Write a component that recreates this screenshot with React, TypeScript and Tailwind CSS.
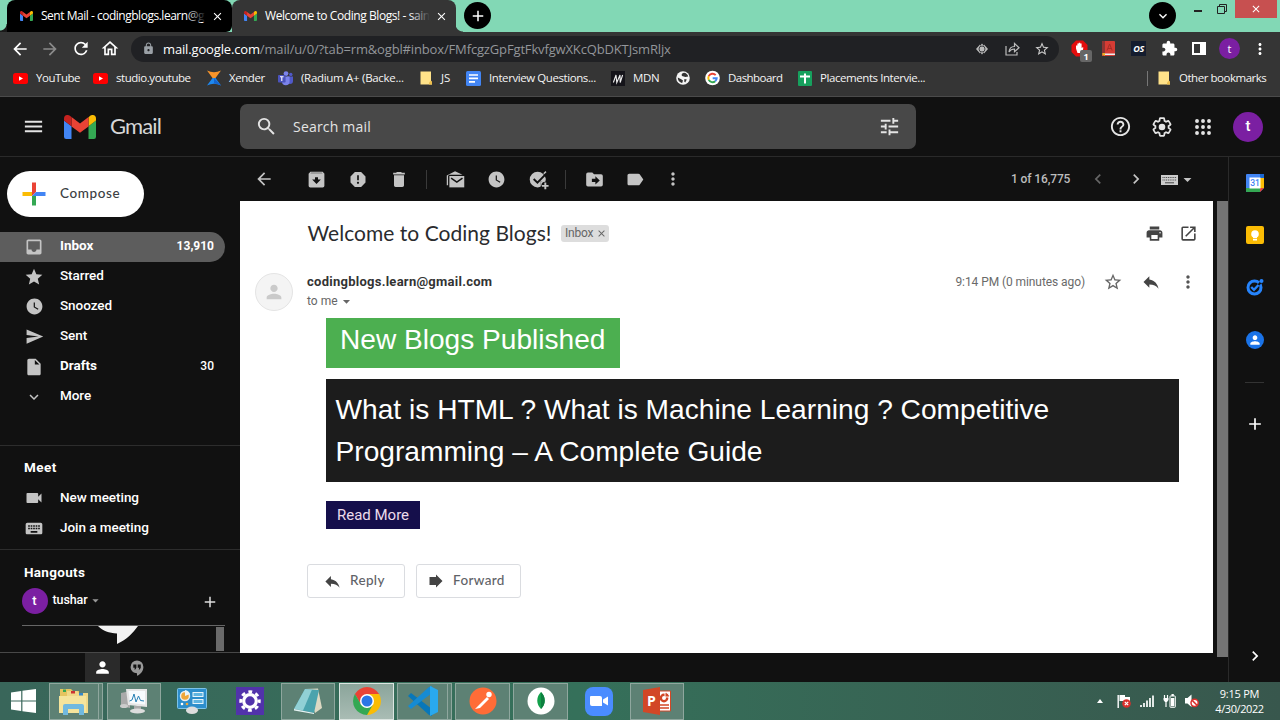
import React from "react";
import {
  MdAdd, MdArrowBack, MdArrowDropDown, MdArrowForward, MdChevronLeft, MdChevronRight, MdClose,
  MdDelete, MdExpandMore, MdExtension, MdHelpOutline, MdInsertDriveFile, MdKeyboard, MdLabel, MdLock,
  MdMenu, MdMoreVert, MdOpenInNew, MdOutlineHome, MdPerson, MdPrint, MdRefresh, MdReply,
  MdReport, MdSearch, MdSend, MdStar, MdStarBorder, MdTune, MdVideocam, MdWatchLater,
} from "react-icons/md";

type Kids = { className?: string; children?: React.ReactNode };

const Cell = ({ className = "", children }: Kids) => (
  <div className={"flex h-[20px] w-[20px] shrink-0 items-center justify-center " + className}>{children}</div>
);

const Label = ({ className = "", children }: Kids) => (
  <span className={"shrink-0 whitespace-nowrap leading-none " + className}>{children}</span>
);

const GmailLogo = ({ className = "" }: { className?: string }) => (
  <svg viewBox="0 0 32 24" className={"shrink-0 " + className}>
    <path d="M2.2 24H7.5V11.2L0 5.6V21.8A2.2 2.2 0 0 0 2.2 24Z" fill="#4285f4" />
    <path d="M24.5 24H29.8A2.2 2.2 0 0 0 32 21.8V5.6L24.5 11.2Z" fill="#34a853" />
    <path d="M24.5 2.2V11.2L32 5.6V3.3C32 .6 28.8-1 26.5.6Z" fill="#fbbc04" />
    <path d="M7.5 11.4V2L16 8.4L24.5 2V11.4L16 17.8Z" fill="#ea4335" />
    <path d="M0 3.3V5.6L7.5 11.2V2L5.5.6C3.2-1 0 .6 0 3.3Z" fill="#c5221f" />
  </svg>
);

const Tab = ({ active, title }: { active?: boolean; title: string }) => (
  <div
    className={
      "relative flex h-[32px] shrink-0 items-center rounded-t-[8px] " +
      (active ? "w-[224px] bg-[#353535] pl-[12px]" : "w-[225px] rounded-br-[6px] bg-black pl-[13px]")
    }
  >
    <GmailLogo className="h-[10px] w-[13px]" />
    <div className="relative ml-[8px] w-[165px]">
      <Label className={"block text-[12px] leading-[18px] text-white " + (active ? "tracking-[-0.42px]" : "tracking-[-0.48px]")}>{title}</Label>
      <div className={"absolute inset-y-0 right-0 w-[20px] bg-linear-to-r from-transparent " + (active ? "to-[#353535]" : "to-black")} />
    </div>
    <MdClose className="ml-[5px] shrink-0 text-[13px] text-white" />
  </div>
);

const YoutubeIcon = () => (
  <svg viewBox="0 0 15 11" className="h-[11px] w-[15px]">
    <rect width="15" height="11" rx="2.5" fill="#f00" />
    <path d="M6 3.2L10 5.5L6 7.8Z" fill="#fff" />
  </svg>
);
const XenderIcon = () => (
  <svg viewBox="0 0 14 16" className="h-[16px] w-[14px]">
    <path d="M0 .5Q7 4 14 .5L8.5 8H5.5Z" fill="#f7942a" />
    <path d="M5.5 8H8.5L14 15.5Q7 12 0 15.5Z" fill="#1e88f0" />
    <path d="M7 8L14 15.5Q10 13.5 7 13.5Z" fill="#1565d0" />
  </svg>
);
const TeamsIcon = () => (
  <svg viewBox="0 0 15 15" className="h-[15px] w-[15px]">
    <circle cx="8" cy="2.6" r="2.4" fill="#7b83eb" />
    <circle cx="12.8" cy="3.4" r="1.7" fill="#5059c9" />
    <path d="M9 5.5H15V10A3 3 0 0 1 9 10Z" fill="#5059c9" />
    <path d="M4 5.5H11.6V10.5A3.8 3.8 0 0 1 4 10.5Z" fill="#7b83eb" />
    <rect y="4" width="7.6" height="7.6" rx=".8" fill="#4b53bc" />
    <path d="M2 5.8H5.6M3.8 5.8V10" stroke="#fff" strokeWidth="1.1" />
  </svg>
);
const FolderIcon = () => (
  <svg viewBox="0 0 12 14" className="h-[14px] w-[12px]">
    <path d="M.5.5H11V10L12 11V13.5H.5Z" fill="#ffe289" />
    <path d="M9 13.5V11.5L11 9.5L12 11V13.5Z" fill="#eebf4d" />
  </svg>
);
const DocsIcon = () => (
  <svg viewBox="0 0 15 15" className="h-[15px] w-[15px]">
    <rect width="15" height="15" rx="1.5" fill="#4285f4" />
    <path d="M3 4H12M3 7.4H12M3 10.8H9" stroke="#fff" strokeWidth="1.7" />
  </svg>
);
const MdnIcon = () => (
  <svg viewBox="0 0 14 15" className="h-[15px] w-[14px]">
    <rect width="14" height="15" fill="#15141a" />
    <path d="M2.4 11.5L5 4L5.8 11.5L9 4L9.2 11.5L11.6 4" stroke="#eee" strokeWidth="1.1" fill="none" />
  </svg>
);
const GlobeIcon = () => (
  <svg viewBox="0 0 14 14" className="h-[14px] w-[14px]">
    <circle cx="7" cy="7" r="6.8" fill="#f4f4f4" />
    <path d="M8 1.8C5.8 2 5.2 3.6 6 5L9.4 6L12.2 5.6C11.8 3.4 10 2 8 1.8ZM1.8 6.6L5.2 8.2L7 9.4L6.2 12C3.6 11.8 1.8 9.4 1.8 6.6ZM8.4 8L10.8 8.4L9.2 11.4L8.2 10.4Z" fill="#333" />
  </svg>
);
const GoogleIcon = () => (
  <svg viewBox="0 0 16 16" className="h-[16px] w-[16px]">
    <circle cx="8" cy="8" r="7.8" fill="#fff" />
    <g fill="none" strokeWidth="2.1">
      <path d="M11.4 4.9A4.5 4.5 0 0 0 4 6" stroke="#ea4335" />
      <path d="M4 6A4.5 4.5 0 0 0 4 10" stroke="#fbbc05" />
      <path d="M4 10A4.5 4.5 0 0 0 10.9 11.4" stroke="#34a853" />
      <path d="M10.9 11.4A4.3 4.3 0 0 0 12.5 8.3H8.2" stroke="#4285f4" />
    </g>
  </svg>
);
const SheetsIcon = () => (
  <svg viewBox="0 0 14 15" className="h-[15px] w-[14px]">
    <rect width="14" height="15" rx="1" fill="#16a05d" />
    <path d="M2 5.6H12M7 2.5V12.5" stroke="#fff" strokeWidth="2" />
  </svg>
);

const Bookmark = ({ icon, className, text, textClass }: { icon: React.ReactNode; className: string; text?: string; textClass?: string }) => (
  <div className={"flex shrink-0 items-center " + className}>
    <div className="flex w-[15px] shrink-0 justify-center">{icon}</div>
    {text && <Label className={"ml-[8px] text-[11.5px] text-[#f4f4f4] " + textClass}>{text}</Label>}
  </div>
);

function Browser() {
  return (
    <div className="flex shrink-0 flex-col font-['Open_Sans',sans-serif]">
      <div className="flex h-[32px] bg-[#82d8b5]">
        <div className="mt-[24px] h-[8px] w-[7px] shrink-0 bg-[radial-gradient(circle_at_0_0,transparent_6px,#1a1a1a_7px)]" />
        <Tab title="Sent Mail - codingblogs.learn@g" />
        <Tab active title="Welcome to Coding Blogs! - sain" />
        <div className="mt-[24px] h-[8px] w-[7px] shrink-0 bg-[radial-gradient(circle_at_100%_0,transparent_7px,#353535_8px)]" />
        <div className="ml-[1px] mt-[2px] flex h-[27px] w-[27px] items-center justify-center rounded-full bg-black">
          <MdAdd className="text-[18px] text-white" />
        </div>
        <div className="ml-auto mt-[2px] flex h-[27px] w-[27px] items-center justify-center rounded-full bg-black">
          <MdExpandMore className="text-[16px] text-white" />
        </div>
        <div className="ml-[18px] mt-[10px] h-[2px] w-[8px] bg-[#222]" />
        <svg viewBox="0 0 10 10" className="ml-[15px] mt-[4px] h-[10px] w-[10px]" fill="none" stroke="#222">
          <path d="M2.5 2V.5H9.5V7.5H8" />
          <path d="M.5 2.5H7.5V9.5H.5Z" />
        </svg>
        <div className="ml-[8px] mr-[3px] flex h-[18px] w-[42px] items-center justify-center bg-[#c75050]">
          <MdClose className="text-[12px] text-white" />
        </div>
      </div>

      <div className="flex h-[33px] items-center bg-[#353535] pl-[10px] text-white">
        <Cell><MdArrowBack className="text-[20px]" /></Cell>
        <Cell className="ml-[10px] text-[#8b8b8b]"><MdArrowForward className="text-[20px]" /></Cell>
        <Cell className="ml-[11px]"><MdRefresh className="text-[21px]" /></Cell>
        <Cell className="ml-[9px]"><MdOutlineHome className="text-[21px]" /></Cell>
        <div className="ml-[11px] flex h-[26px] w-[928px] items-center rounded-full bg-[#202124] pl-[11px]">
          <MdLock className="w-[13px] text-[13px] text-[#9aa0a6]" />
          <Label className="ml-[8px] pt-px text-[13px] tracking-[-0.15px] text-[#93969a]"><span className="text-white">mail.google.com</span>/mail/u/0/?tab=rm&amp;ogbl#inbox/FMfcgzGpFgtFkvfgwXKcQbDKTJsmRljx</Label>
          <svg viewBox="0 0 12 12" className="ml-auto h-[12px] w-[12px]">
            <path d="M0 6L4 1.5V10.5ZM12 6L8 1.5V10.5Z" fill="#bbb" />
            <path d="M6 .5L10.5 6L6 11.5L1.5 6Z" fill="#bbb" />
            <circle cx="6" cy="6" r="3" fill="#bbb" stroke="#202124" strokeWidth=".8" />
          </svg>
          <svg viewBox="0 0 15 14" className="ml-[17px] h-[14px] w-[15px]" fill="none" stroke="#bbb" strokeWidth="1.2">
            <path d="M1 4V13H12V10" />
            <path d="M4 10C4.3 6.5 6.4 4.6 9.5 4.5V1.5L14 5.7L9.5 9.7V7C7 7 5.2 8 4 10Z" />
          </svg>
          <MdStarBorder className="ml-[14px] mr-[9px] text-[16px] text-[#ccc]" />
        </div>
        <div className="relative ml-[12px] h-[17px] w-[17px]">
          <svg viewBox="0 0 17 17" className="h-[17px] w-[17px]">
            <path d="M5 .5H12L16.5 5V12L12 16.5H5L.5 12V5Z" fill="#e40d0d" />
            <path d="M5 8.5V5.5H6.4V3.5H7.8V2.8H9.2V3.5H10.6V8L12.2 7V9L10.5 13H6.5Z" fill="#fff" />
          </svg>
          <div className="absolute left-[9px] top-[10px] flex h-[12px] w-[12px] items-center justify-center rounded-[2px] bg-[#666] text-[9px] font-bold leading-none">1</div>
        </div>
        <svg viewBox="0 0 13 15" className="ml-[14px] h-[15px] w-[13px]">
          <rect width="13" height="15" rx="1" fill="#d63c34" />
          <path d="M0 0H3V12H0Z" fill="#8d3533" />
          <path d="M1 12.5H13V14H1Z" fill="#eee" />
          <path d="M5 9.5L7.6 3L10.2 9.5M6 7.5H9.2" stroke="#a82c26" fill="none" />
          <path d="M.5 12H3V15L1.7 14L.5 15Z" fill="#e8b422" />
        </svg>
        <div className="ml-[16px] flex h-[15px] w-[15px] items-center justify-center bg-[#141c2e] text-[9px] font-bold italic leading-none tracking-[-0.5px]">OS</div>
        <MdExtension className="ml-[15px] text-[17px]" />
        <div className="ml-[14px] flex h-[13px] w-[14px] justify-end border-2 border-white"><div className="w-[4px] bg-white" /></div>
        <div className="ml-[13px] flex h-[21px] w-[21px] items-center justify-center rounded-full bg-[#7b1fa2] text-[11px] leading-none">t</div>
        <MdMoreVert className="ml-[11px] text-[18px]" />
      </div>

      <div className="flex h-[32px] items-center border-b border-[#4b4b4b] bg-[#353535] pb-[5px] pl-[13px]">
        <Bookmark className="w-[80px]" icon={<YoutubeIcon />} text="YouTube" textClass="tracking-[-0.45px]" />
        <Bookmark className="w-[113px]" icon={<YoutubeIcon />} text="studio.youtube" textClass="tracking-[-0.45px]" />
        <Bookmark className="w-[72px]" icon={<XenderIcon />} text="Xender" textClass="tracking-[-0.45px]" />
        <Bookmark className="w-[140px]" icon={<TeamsIcon />} text="(Radium A+ (Backe..." textClass="tracking-[-0.3px]" />
        <Bookmark className="w-[48px]" icon={<FolderIcon />} text="JS" />
        <Bookmark className="w-[144px]" icon={<DocsIcon />} text="Interview Questions..." textClass="tracking-[-0.42px]" />
        <Bookmark className="w-[65px]" icon={<MdnIcon />} text="MDN" textClass="tracking-[-0.3px]" />
        <Bookmark className="w-[30px]" icon={<GlobeIcon />} />
        <Bookmark className="w-[92px]" icon={<GoogleIcon />} text="Dashboard" textClass="tracking-[-0.55px]" />
        <Bookmark className="w-[140px]" icon={<SheetsIcon />} text="Placements Intervie..." textClass="tracking-[-0.43px]" />
        <div className="ml-auto h-[15px] w-px bg-[#777]" />
        <Bookmark className="ml-[8px] w-[124px]" icon={<FolderIcon />} text="Other bookmarks" textClass="tracking-[-0.47px]" />
      </div>
    </div>
  );
}

function Header() {
  return (
    <div className="flex h-[60px] shrink-0 items-center border-b border-[#2a2a2a] bg-[#111] text-[#e4e4e4]">
      <MdMenu className="ml-[22px] w-[23px] text-[23px]" />
      <GmailLogo className="ml-[19px] h-[24px] w-[32px]" />
      <Label className="ml-[14px] w-[130px] pb-[2px] font-['Lato',sans-serif] text-[22px] tracking-[-0.85px] text-[#d6d6d6]">Gmail</Label>
      <div className="flex h-[45px] w-[676px] shrink-0 items-center rounded-[7px] bg-[#484848] pl-[15px] pr-[15px] font-['Open_Sans',sans-serif]">
        <MdSearch className="text-[23px]" />
        <Label className="ml-[15px] text-[14px] font-medium tracking-[0.2px]">Search mail</Label>
        <MdTune className="ml-auto text-[23px]" />
      </div>
      <MdHelpOutline className="ml-[193px] w-[23px] text-[23px]" />
      <svg viewBox="0 0 24 24" className="ml-[18.5px] h-[22px] w-[22px] shrink-0">
        <path
          d="M19.14,12.94c0.04-0.3,0.06-0.61,0.06-0.94c0-0.32-0.02-0.64-0.07-0.94l2.03-1.58c0.18-0.14,0.23-0.41,0.12-0.61l-1.92-3.32c-0.12-0.22-0.37-0.29-0.59-0.22l-2.39,0.96c-0.5-0.38-1.03-0.7-1.62-0.94L14.4,2.81c-0.04-0.24-0.24-0.41-0.48-0.41h-3.84c-0.24,0-0.43,0.17-0.47,0.41L9.25,5.35C8.66,5.59,8.12,5.92,7.63,6.29L5.24,5.33c-0.22-0.08-0.47,0-0.59,0.22L2.74,8.87C2.62,9.08,2.66,9.34,2.86,9.48l2.03,1.58C4.84,11.36,4.8,11.69,4.8,12s0.02,0.64,0.07,0.94l-2.03,1.58c-0.18,0.14-0.23,0.41-0.12,0.61l1.92,3.32c0.12,0.22,0.37,0.29,0.59,0.22l2.39-0.96c0.5,0.38,1.03,0.7,1.62,0.94l0.36,2.54c0.05,0.24,0.24,0.41,0.48,0.41h3.84c0.24,0,0.44-0.17,0.47-0.41l0.36-2.54c0.59-0.24,1.13-0.56,1.62-0.94l2.39,0.96c0.22,0.08,0.47,0,0.59-0.22l1.92-3.32c0.12-0.22,0.07-0.47-0.12-0.61L19.14,12.94z"
          fill="none" stroke="currentColor" strokeWidth="1.9"
        />
        <circle cx="12" cy="12" r="3.6" fill="currentColor" />
      </svg>
      <svg viewBox="0 0 16 16" className="ml-[22.5px] h-[16px] w-[16px] shrink-0" fill="currentColor">
        {[2, 8, 14].map((y) => [2, 8, 14].map((x) => <circle key={x + "-" + y} cx={x} cy={y} r="1.95" />))}
      </svg>
      <div className="ml-[22px] flex h-[30px] w-[30px] shrink-0 items-center justify-center rounded-full bg-[#7b1fa2] font-['Roboto',sans-serif] text-[15px] font-medium text-white">t</div>
    </div>
  );
}

const InboxGlyph = () => (
  <svg viewBox="0 0 24 24" className="h-[20px] w-[20px]" fill="currentColor">
    <path d="M19 3H5c-1.1 0-2 .9-2 2v14c0 1.1.9 2 2 2h14c1.1 0 2-.9 2-2V5c0-1.1-.9-2-2-2zm0 12h-4c0 1.66-1.35 3-3 3s-3-1.34-3-3H5V5h14v10z" />
  </svg>
);

const NavRow = ({ icon, text, count, active, bold }: { icon: React.ReactNode; text: string; count?: string; active?: boolean; bold?: boolean }) => (
  <div className={"flex h-[30px] w-[225px] shrink-0 items-center rounded-r-full pl-[24px] pr-[11px] text-white " + (active ? "bg-[#5d5d5d]" : "")}>
    <Cell className="text-[20px] text-[#c4c4c4]">{icon}</Cell>
    <Label className={"ml-[16px] pb-[1px] text-[13.5px] " + (bold ? "font-bold tracking-[0px]" : "font-medium tracking-[-0.05px]")}>{text}</Label>
    {count && <Label className={"ml-auto pb-[1px] text-[12px] " + (active ? "font-bold" : "font-medium")}>{count}</Label>}
  </div>
);

function Sidebar() {
  return (
    <div className="flex w-[240px] shrink-0 flex-col font-['Roboto',sans-serif]">
      <div className="ml-[7px] mt-[14px] flex h-[46px] w-[137px] shrink-0 items-center rounded-full bg-white pl-[15px]">
        <svg viewBox="0 0 24 24" className="h-[24px] w-[24px]">
          <path d="M10 0.5H14V10L10 14Z" fill="#ea4335" />
          <path d="M0.5 10H10V14H0.5Z" fill="#fbbc04" />
          <path d="M14 10H23.5V14H12L10 14Z" fill="#4285f4" />
          <path d="M10 14H14V23.5H10Z" fill="#34a853" />
        </svg>
        <Label className="ml-[14px] font-['Lato',sans-serif] text-[13.5px] font-medium tracking-[0.6px] text-[#3c4043]">Compose</Label>
      </div>
      <div className="mt-[14.5px] flex flex-col">
        <NavRow active bold icon={<InboxGlyph />} text="Inbox" count="13,910" />
        <NavRow icon={<MdStar />} text="Starred" />
        <NavRow icon={<MdWatchLater className="text-[19px]" />} text="Snoozed" />
        <NavRow icon={<MdSend className="text-[19px]" />} text="Sent" />
        <NavRow bold icon={<MdInsertDriveFile />} text="Drafts" count="30" />
        <NavRow icon={<MdExpandMore className="text-[18px]" />} text="More" />
      </div>
      <div className="mt-[33.5px] flex h-[104px] shrink-0 flex-col border-t border-[#2d2d2d]">
        <Label className="ml-[24px] mt-[15px] h-[22px] text-[13.5px] font-bold tracking-[0.45px] text-white">Meet</Label>
        <NavRow icon={<MdVideocam />} text="New meeting" />
        <NavRow icon={<MdKeyboard className="text-[21px]" />} text="Join a meeting" />
      </div>
      <div className="flex h-[103px] shrink-0 flex-col border-t border-[#2d2d2d]">
        <Label className="ml-[24px] mt-[16px] text-[13.5px] font-bold tracking-[0.3px] text-white">Hangouts</Label>
        <div className="mt-[7.5px] flex h-[27px] items-center pl-[21.5px]">
          <div className="flex h-[26px] w-[26px] items-center justify-center rounded-full bg-[#7b1fa2] text-[13px] font-medium text-white">t</div>
          <Label className="ml-[5px] text-[12.5px] font-medium tracking-[-0.1px] text-white">tushar</Label>
          <MdArrowDropDown className="text-[15px] text-[#999]" />
          <MdAdd className="ml-auto mr-[21px] mt-[3px] text-[18px] text-[#ddd]" />
        </div>
        <div className="ml-[22px] mt-[11px] flex h-[26px] w-[203px] border-t border-[#666]">
          <svg viewBox="0 0 40 18" className="ml-[76px] h-[18px] w-[40px]"><path d="M0 0H40C35 7 28 14 19 18V7.5C11 7 5 5 0 0Z" fill="#f2f2f2" /></svg>
          <div className="ml-auto mr-[1px] mt-[1px] h-[24px] w-[8px] bg-[#6a6a6a]" />
        </div>
      </div>
      <div className="flex h-[30px] shrink-0 border-t border-[#484848] pl-[85px]">
        <div className="flex w-[35px] items-center justify-center bg-[#2a2a2a]"><MdPerson className="text-[19px] text-white" /></div>
        <svg viewBox="0 0 14 16" className="ml-[10px] mt-[7px] h-[16px] w-[14px]">
          <path d="M7 .5A6.4 6.4 0 0 0 .6 6.9C.6 10.4 3.4 13 7 13.2V15.8C11 14 13.4 10.5 13.4 6.9A6.4 6.4 0 0 0 7 .5Z" fill="#999" />
          <path d="M3.3 4.5H6.4V7.8L5.3 9.6H4.3L4.9 7.8H3.3ZM7.7 4.5H10.8V7.8L9.7 9.6H8.7L9.3 7.8H7.7Z" fill="#111" />
        </svg>
      </div>
    </div>
  );
}

const ToolSep = ({ className = "" }: { className?: string }) => <div className={"h-[19px] w-px shrink-0 bg-[#3a3a3a] " + className} />;

const glyph = "h-[21px] w-[21px] shrink-0";

function MailToolbar() {
  return (
    <div className="flex h-[44px] shrink-0 items-center pl-[14px] text-[20px] text-[#c4c4c4]">
      <Cell><MdArrowBack /></Cell>
      <Cell className="ml-[32.5px]">
        <svg viewBox="0 0 24 24" className={glyph} fill="currentColor">
          <path d="M5 3H19L21 5.5V19A2 2 0 0 1 19 21H5A2 2 0 0 1 3 19V5.5Z" />
          <path d="M5 5.2L6 4H18L19 5.2Z" fill="#777" />
          <path d="M12 17L7 12H10.3V9.5H13.7V12H17Z" fill="#111" />
        </svg>
      </Cell>
      <Cell className="ml-[21.5px]"><MdReport className="text-[21px]" /></Cell>
      <Cell className="ml-[21px]"><MdDelete className="text-[21px]" /></Cell>
      <ToolSep className="ml-[17px]" />
      <Cell className="ml-[18px]">
        <svg viewBox="0 0 24 24" className={glyph} fill="currentColor">
          <path d="M3 18.5H2V7.5L11.5 2.5L20 6.5H4.5L3.5 8V18.5Z" />
          <path d="M5 8H22V21H5Z" />
          <path d="M7 10.5L13.5 15L20 10.5" stroke="#111" strokeWidth="1.8" fill="none" />
        </svg>
      </Cell>
      <Cell className="ml-[21.5px]"><MdWatchLater className="text-[19px]" /></Cell>
      <Cell className="ml-[21.5px]">
        <svg viewBox="0 0 24 24" className={glyph} fill="currentColor">
          <circle cx="11" cy="12" r="9" />
          <path d="M14 14H24V24H14Z" fill="#111" />
          <path d="M18 19A9 9 0 0 0 20 12V10H16V14H14V20Z" />
          <path d="M6.5 11.5L10.8 15.6L22 4.2" stroke="#111" strokeWidth="2.2" fill="none" />
          <path d="M18 5.4L20.5 3" stroke="currentColor" strokeWidth="1.6" />
          <circle cx="19.8" cy="19.3" r="4.6" fill="#111" />
          <path d="M19.8 15.5V23M16 19.3H23.5" stroke="currentColor" strokeWidth="2.2" />
        </svg>
      </Cell>
      <ToolSep className="ml-[17px]" />
      <Cell className="ml-[18px]">
        <svg viewBox="0 0 24 24" className={glyph} fill="currentColor">
          <path d="M4.5 4H9.5L11.5 6H19.5A2 2 0 0 1 21.5 8V18A2 2 0 0 1 19.5 20H4.5A2 2 0 0 1 2.5 18V6A2 2 0 0 1 4.5 4Z" />
          <path d="M9 11.2H13V8.2L18 13L13 17.8V14.8H9Z" fill="#111" />
        </svg>
      </Cell>
      <Cell className="ml-[21px]"><MdLabel className="text-[21px]" /></Cell>
      <Cell className="ml-[17.5px]"><MdMoreVert /></Cell>
      <Label className="ml-[328.5px] w-[76px] font-['Roboto',sans-serif] text-[12px] font-medium tracking-[-0.12px] text-[#bdbdbd]">1 of 16,775</Label>
      <Cell className="ml-[1px] text-[#666]"><MdChevronLeft /></Cell>
      <Cell className="ml-[17.5px]"><MdChevronRight /></Cell>
      <svg viewBox="0 0 17 10" className="ml-[15.5px] mt-[2px] h-[10px] w-[17px]">
        <path d="M0 0H17V10H0Z" fill="#ccc" />
        <path d="M1.5 2.5H15.5M1.5 5H15.5" stroke="#444" strokeDasharray="1 .8" />
        <path d="M4 7.8H13" stroke="#444" />
      </svg>
      <MdArrowDropDown className="text-[19px]" />
    </div>
  );
}

const ReplyButton = ({ className, icon, text }: { className: string; icon: React.ReactNode; text: string }) => (
  <div className={"flex h-[34px] items-center rounded-[3px] border border-[#dadce0] text-[#5f6368] " + className}>
    {icon}
    <Label className="ml-[8px] font-['Lato',sans-serif] text-[13.5px] font-medium tracking-[0.35px]">{text}</Label>
  </div>
);

function Message() {
  return (
    <div className="flex h-[452px] w-[973px] shrink-0 flex-col bg-white font-['Roboto',sans-serif]">
      <div className="mt-[16px] flex h-[32px] items-center pl-[67.5px]">
        <Label className="pb-[2px] font-['Lato',sans-serif] text-[21px] tracking-[0.03px] text-[#2a2b2e]">Welcome to Coding Blogs!</Label>
        <div className="ml-[9.5px] flex h-[17px] w-[48px] items-center rounded-[3px] bg-[#ddd] pl-[4px] text-[#666]">
          <Label className="text-[12px] tracking-[-0.2px]">Inbox</Label>
          <MdClose className="ml-[3px] text-[11px]" />
        </div>
        <MdPrint className="ml-auto text-[19px] text-[#444]" />
        <MdOpenInNew className="ml-[15px] mr-[15px] text-[19px] text-[#444]" />
      </div>
      <div className="mt-[23px] flex h-[42px]">
        <div className="ml-[15px] mt-[1px] flex h-[38px] w-[38px] items-center justify-center rounded-full border border-[#e4e4e4] bg-[#f4f4f4]">
          <MdPerson className="text-[22px] text-[#cacaca]" />
        </div>
        <div className="ml-[14px] mt-[3px] flex flex-col">
          <Label className="text-[13px] font-bold tracking-[0.26px] text-[#333]">codingblogs.learn@gmail.com</Label>
          <div className="mt-[6px] flex h-[14px] items-center text-[#666]">
            <Label className="text-[12px] tracking-[0px]">to me</Label>
            <MdArrowDropDown className="text-[17px]" />
          </div>
        </div>
        <Label className="ml-auto mt-[4px] text-[12px] tracking-[-0.08px] text-[#6a6a6a]">9:14 PM (0 minutes ago)</Label>
        <MdStarBorder className="ml-[18px] text-[20px] text-[#666]" />
        <MdReply className="ml-[18px] text-[20px] text-[#444]" />
        <MdMoreVert className="ml-[17px] mr-[15px] text-[20px] text-[#555]" />
      </div>
      <div className="ml-[86px] mt-[4px] flex flex-col items-start font-['Liberation_Sans',sans-serif]">
        <h1 className="h-[50px] w-[294px] whitespace-nowrap bg-[#4caf50] pl-[14px] text-[28.1px] leading-[44px] text-white">New Blogs Published</h1>
        <p className="mt-[11px] h-[103px] w-[853px] bg-[#1c1c1c] pl-[9.5px] pt-[10px] text-[28.15px] leading-[42.4px] text-white">
          What is HTML ? What is Machine Learning ? Competitive<br />Programming – A Complete Guide
        </p>
        <div className="mt-[19px] flex h-[28px] w-[94px] items-center justify-center bg-[#150f4b] font-['Roboto',sans-serif] text-[15px] text-[#ecdcec]">Read More</div>
      </div>
      <div className="ml-[67px] mt-[35px] flex gap-[11px]">
        <ReplyButton className="w-[98px] pl-[15px]" icon={<MdReply className="text-[19px] text-[#444]" />} text="Reply" />
        <ReplyButton
          className="w-[105px] pl-[12px]"
          icon={<svg viewBox="0 0 14 14" className="mr-[2px] h-[14px] w-[14px]"><path d="M.5 3H7V.5L13.5 7L7 13.5V11H.5Z" fill="#444" /></svg>}
          text="Forward"
        />
      </div>
    </div>
  );
}

function SidePanel() {
  return (
    <div className="flex w-[52px] shrink-0 flex-col items-center border-l border-[#2a2a2a] text-white">
      <svg viewBox="0 0 18 18" className="mt-[17px] h-[18px] w-[18px]">
        <path d="M0 1A1 1 0 0 1 1 0H17A1 1 0 0 1 18 1V14L14 18H1A1 1 0 0 1 0 17Z" fill="#4285f4" />
        <path d="M14 4H18V14H14Z" fill="#fbbc04" />
        <path d="M4 14H14V18H1A1 1 0 0 1 0 17V14Z" fill="#34a853" />
        <path d="M14 14H18L14 18Z" fill="#ea4335" />
        <path d="M14 0H17A1 1 0 0 1 18 1V4H14Z" fill="#1967d2" />
        <rect x="3.5" y="3.5" width="11" height="11" fill="#fff" />
        <text x="9" y="12" textAnchor="middle" fontSize="8.5" fontFamily="Roboto" fontWeight="500" fill="#4285f4">31</text>
      </svg>
      <div className="mt-[34px] flex h-[18px] w-[18px] items-center justify-center rounded-[2px] bg-[#fbbc04]">
        <svg viewBox="0 0 8 11" className="h-[11px] w-[8px]" fill="#fff"><circle cx="4" cy="4" r="3.8" /><path d="M2 6H6V8.2H2ZM2 9H6V10.5H2Z" /></svg>
      </div>
      <svg viewBox="0 0 18 18" className="mt-[34px] h-[18px] w-[18px]" fill="none">
        <circle cx="8.5" cy="9.5" r="6.5" stroke="#2684fc" strokeWidth="3" />
        <path d="M8 11.8L16 3" stroke="#111" strokeWidth="2" />
        <path d="M5.2 9L8 11.8L12.5 7" stroke="#2684fc" strokeWidth="2.4" />
        <circle cx="15.5" cy="3" r="2" fill="#2684fc" />
      </svg>
      <div className="mt-[35px] flex h-[18px] w-[18px] items-center justify-center rounded-full bg-[#1a73e8]"><MdPerson className="text-[14px]" /></div>
      <div className="mt-[33px] h-px w-[19px] bg-[#333]" />
      <MdAdd className="mt-[31px] text-[20px]" />
      <MdChevronRight className="mt-[212px] text-[20px]" />
    </div>
  );
}

const TaskButton = ({ className = "", children }: Kids) => (
  <div className={"flex h-[37px] shrink-0 items-center justify-center border border-[#8fa79e] bg-[#5d8174] " + className}>{children}</div>
);

function Taskbar() {
  return (
    <div className="flex h-[38px] shrink-0 items-center bg-linear-to-r from-[#39665a] via-[#35705a] via-45% to-[#38574d] font-['Open_Sans',sans-serif]">
      <svg viewBox="0 0 25 24" className="ml-[11px] h-[24px] w-[25px]" fill="#fff">
        <path d="M0 3.4L10.2 2V11.4H0ZM11.4 1.8L25 0V11.4H11.4ZM0 12.6H10.2V22L0 20.6ZM11.4 12.6H25V24L11.4 22.2Z" />
      </svg>
      <TaskButton className="ml-[13px] w-[50px]">
        <svg viewBox="0 0 30 28" className="h-[28px] w-[30px]">
          <path d="M1 2H12L14 4H20V26H1Z" fill="#e5c460" />
          <path d="M8 4H18L20 6H29V26H8Z" fill="#f0d887" />
          <path d="M4 2.5H7V5H4Z" fill="#35a853" /><path d="M12 4H16V6.5H12Z" fill="#c33" /><path d="M20 6H24V8.5H20Z" fill="#38c" />
          <path d="M0 9H27V26H0Z" fill="#f5e49c" />
          <path d="M4 28V19Q4 17 6 17H23Q25 17 25 19V28H20V22H9V28Z" fill="#71b9df" />
        </svg>
      </TaskButton>
      <div className="h-[37px] w-[4px] border border-l-0 border-[#8fa79e] bg-[#5d8174]" />
      <TaskButton className="ml-[4px] w-[54px]">
        <svg viewBox="0 0 28 26" className="h-[26px] w-[28px]">
          <path d="M1 5L10 3V20L1 18Z" fill="#aaa" />
          <path d="M6 1H27V19L8 17Z" fill="#e6e6e6" />
          <path d="M8.5 3H25V16.5L10 15Z" fill="#f7fbfd" />
          <path d="M9.5 13L12 12L14 6L16 14L18.5 8L20.5 12.5L24 13" fill="none" stroke="#2781b5" />
          <path d="M14 18H21V22H14Z" fill="#aaa" /><ellipse cx="17.5" cy="23" rx="7.5" ry="2.4" fill="#ddd" />
          <ellipse cx="4" cy="18" rx="4" ry="2" fill="#ccc" />
        </svg>
      </TaskButton>
      <svg viewBox="0 0 30 26" className="ml-[16px] h-[26px] w-[30px]">
        <rect x=".5" y=".5" width="29" height="20" rx="1" fill="#2d8ecb" stroke="#7cc3e8" />
        <circle cx="8" cy="8" r="4.5" fill="#f0a73a" stroke="#eee" strokeWidth="1.4" />
        <path d="M8 8V2A6 6 0 0 1 13 6Z" fill="#e9f4fa" />
        <rect x="16" y="4.5" width="10" height="4" fill="#5fb4e0" stroke="#e8f5fb" /><rect x="16" y="11.5" width="10" height="4" fill="#5fb4e0" stroke="#e8f5fb" />
        <circle cx="5" cy="16" r="1.3" fill="#fff" /><circle cx="10" cy="16" r="1.3" fill="#f0a73a" />
        <ellipse cx="15" cy="22.3" rx="6" ry="3.7" fill="#ddd" />
      </svg>
      <div className="ml-[29px] flex h-[28px] w-[28px] items-center justify-center bg-[#5133ab]">
        <svg viewBox="0 0 22 22" className="h-[22px] w-[22px]" fill="none" stroke="#fff">
          <circle cx="11" cy="11" r="6.3" strokeWidth="3.2" />
          <circle cx="11" cy="11" r="9.2" strokeWidth="3" strokeDasharray="3.8 3.425" strokeDashoffset="1.9" />
        </svg>
      </div>
      <TaskButton className="ml-[17px] w-[54px]">
        <svg viewBox="0 0 28 26" className="h-[26px] w-[28px]">
          <path d="M11 1L24 .5L28 20L21 25Z" fill="#ddd9c3" />
          <path d="M11 1L25 2L20 25L0 21Z" fill="#4ba3ad" />
          <path d="M11 1L18 1.5L9 22.5L0 21Z" fill="#91d0d5" />
          <path d="M0 21L20 25V26L0 22.5Z" fill="#e6f4f4" />
        </svg>
      </TaskButton>
      <TaskButton className="ml-[4px] w-[55px] border-[#dce5e1] bg-linear-to-b from-[#8ba59b] to-[#a9bcb4]">
        <svg viewBox="0 0 28 28" className="h-[28px] w-[28px]">
          <path d="M14 14L1.9 7A14 14 0 0 1 26.1 7Z" fill="#ea4335" />
          <path d="M14 7H26.1A14 14 0 0 1 14 28L14 21L20 17.5Z" fill="#fbbc04" />
          <path d="M1.9 7L8 17.5L14 14V7Z" fill="#ea4335" />
          <path d="M1.9 7L8 17.5L14 21L20 17.5L14 28A14 14 0 0 1 1.9 7Z" fill="#34a853" />
          <circle cx="14" cy="14" r="7" fill="#fff" /><circle cx="14" cy="14" r="5.5" fill="#2b76e5" />
        </svg>
      </TaskButton>
      <TaskButton className="ml-[3px] w-[51px]">
        <svg viewBox="0 0 31 30" className="h-[30px] w-[31px]">
          <path d="M1 10L4 7L25 23V30L22 29Z" fill="#0877b9" />
          <path d="M1 20L4 23L25 7V0L22 1Z" fill="#168bd3" />
          <path d="M23 0L31 4V26L23 30Z" fill="#29a9ef" />
        </svg>
      </TaskButton>
      <div className="h-[37px] w-[4px] border border-l-0 border-[#8fa79e] bg-[#5d8174]" />
      <TaskButton className="ml-[3px] w-[55px]">
        <svg viewBox="0 0 28 28" className="h-[28px] w-[28px]">
          <circle cx="14" cy="14" r="13.5" fill="#ff6c37" />
          <circle cx="20" cy="7.5" r="2.7" fill="#fff" />
          <path d="M18 10L8 20L6 22L11 21L20 12Z" fill="#fff" />
        </svg>
      </TaskButton>
      <TaskButton className="ml-[3px] w-[55px]">
        <svg viewBox="0 0 28 28" className="h-[28px] w-[28px]">
          <circle cx="14" cy="14" r="13.5" fill="#fff" />
          <path d="M14 5C19 10 19 17 14 22C9 17 9 10 14 5Z" fill="#13a04b" /><path d="M14 5C19 10 19 17 14 22Z" fill="#0e8040" />
        </svg>
      </TaskButton>
      <div className="ml-[17px] flex h-[29px] w-[28px] items-center justify-center rounded-[8px] bg-[#4a8cff]">
        <svg viewBox="0 0 18 10" className="h-[10px] w-[18px]" fill="#fff"><path d="M0 1Q0 0 1 0H10Q12 0 12 2V10H2Q0 10 0 8ZM13 3.5L18 .5V9.5L13 6.5Z" /></svg>
      </div>
      <TaskButton className="ml-[17px] w-[54px]">
        <svg viewBox="0 0 28 28" className="h-[28px] w-[28px]">
          <path d="M14 4H27.5V24H14Z" fill="#fff" stroke="#d24726" />
          <path d="M17 18H26M17 21H26" stroke="#d24726" strokeWidth="1.3" />
          <circle cx="21" cy="11" r="3.2" fill="none" stroke="#d24726" strokeWidth="2.4" />
          <path d="M22 5.5V10H26.5A4.5 4.5 0 0 0 22 5.5Z" fill="#d24726" stroke="#fff" strokeWidth=".9" />
          <path d="M0 3L17 0V28L0 25Z" fill="#d24726" />
          <text x="4" y="19" fontSize="14" fontFamily="Open Sans" fontWeight="700" fill="#fff">P</text>
        </svg>
      </TaskButton>
      <svg viewBox="0 0 6 4" className="ml-auto h-[4px] w-[6px]"><path d="M0 4L3 0L6 4Z" fill="#fff" /></svg>
      <svg viewBox="0 0 14 14" className="ml-[14px] h-[14px] w-[14px]">
        <path d="M1.2 1V14" stroke="#fff" strokeWidth="1.4" /><path d="M2.5 1H8V3H13V9H7V7H2.5Z" fill="#fff" />
        <circle cx="9.5" cy="9.5" r="4.3" fill="#d9302c" /><path d="M7.8 7.8L11.2 11.2M11.2 7.8L7.8 11.2" stroke="#fff" strokeWidth="1.2" />
      </svg>
      <svg viewBox="0 0 14 12" className="ml-[9px] h-[12px] w-[14px]" stroke="#fff" strokeWidth="1.7">
        <path d="M1 12V10M4 12V8M7 12V5.5M10 12V3M13 12V.5" />
      </svg>
      <svg viewBox="0 0 13 14" className="ml-[9px] h-[14px] w-[13px]">
        <path d="M1.5 1V4M4.5 1V4M3 8V13" stroke="#fff" strokeWidth="1.2" /><path d="M.5 4H5.5V6L4 8H2L.5 6Z" fill="#fff" />
        <rect x="7" y="2" width="5.3" height="11.3" rx=".5" fill="none" stroke="#fff" /><path d="M8 4H11.3V12.2H8ZM8.5 0H10.8V2H8.5Z" fill="#fff" />
      </svg>
      <svg viewBox="0 0 14 14" className="ml-[9px] h-[14px] w-[14px]">
        <path d="M0 4H2.5L6.5 .5V13L2.5 9.5H0Z" fill="#fff" />
        <circle cx="9.6" cy="8.8" r="3.6" fill="#fff" stroke="#d9302c" strokeWidth="1.5" /><path d="M7.2 6.4L12 11.2" stroke="#d9302c" strokeWidth="1.5" />
      </svg>
      <div className="ml-[15px] mr-[15px] flex w-[51px] flex-col items-center text-[11px] text-white">
        <Label className="tracking-[-0.25px]">9:15 PM</Label>
        <Label className="mt-[4px] tracking-[-0.4px]">4/30/2022</Label>
      </div>
    </div>
  );
}

export default function App() {
  return (
    <div className="flex h-[720px] w-[1280px] flex-col overflow-hidden bg-[#111]">
      <Browser />
      <div className="flex h-[585px] shrink-0 flex-col">
        <Header />
        <div className="flex h-[525px]">
          <Sidebar />
          <div className="flex w-[988px] shrink-0 flex-col">
            <MailToolbar />
            <div className="flex">
              <Message />
              <div className="ml-[4px] h-[456px] w-[11px] bg-[#747474]" />
            </div>
          </div>
          <SidePanel />
        </div>
      </div>
      <Taskbar />
    </div>
  );
}
